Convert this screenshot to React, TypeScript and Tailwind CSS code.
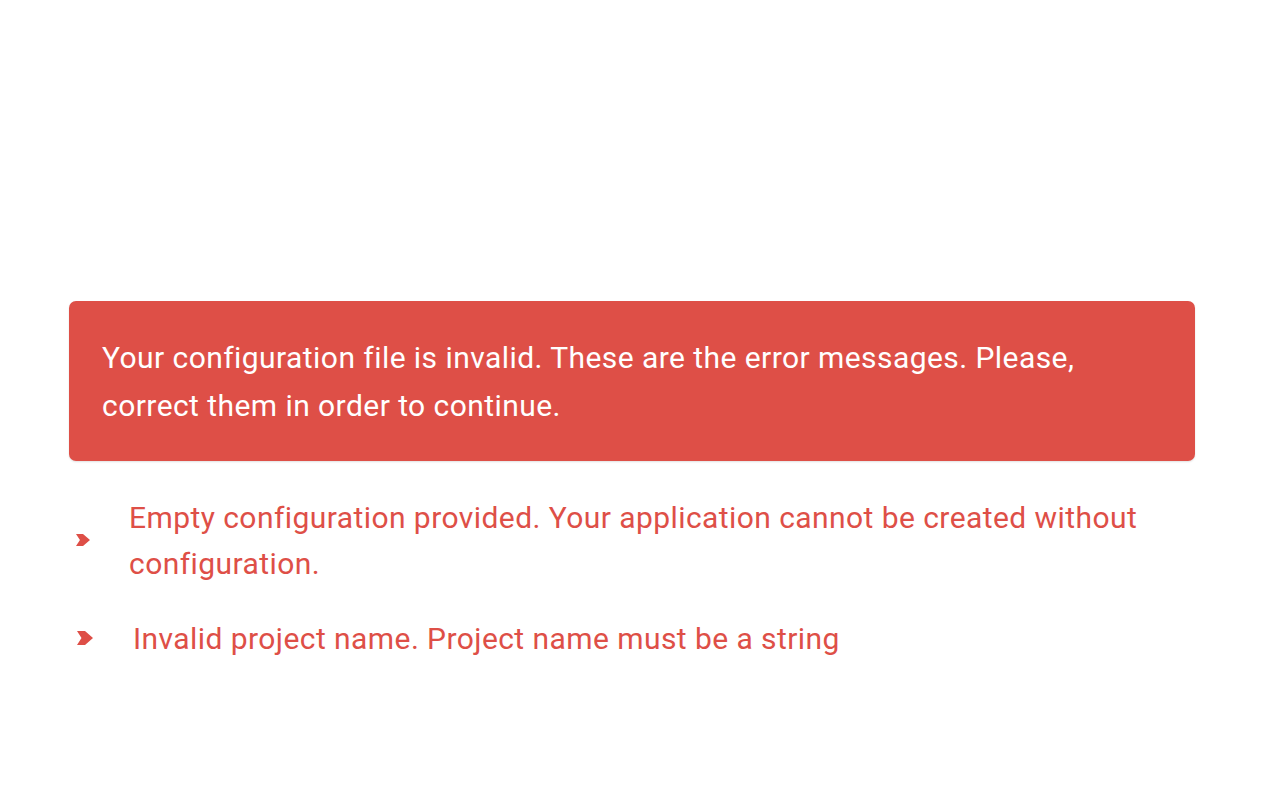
import React from "react";

function Chevron({ className }: { className?: string }) {
  return (
    <svg viewBox="0 0 16 14" className={className} fill="#de4f47" preserveAspectRatio="none">
      <polygon points="0,0 8,0 16,7 8,14 0,14 4.5,7" />
    </svg>
  );
}

export default function App() {
  const font = { fontFamily: "Roboto, 'Liberation Sans', sans-serif" };
  return (
    <div className="min-h-[792px] w-full bg-white" style={font}>
      <div className="pt-[301px] pl-[69px] w-[1195px]">
        <div className="rounded-[7px] bg-[#de4f47] px-[33px] pt-[33px] pb-[31px] text-white text-[30px] tracking-[0.44px] leading-[48px] shadow-[0_1px_2px_rgba(0,0,0,0.12)]">
          Your configuration file is invalid. These are the error messages. Please, correct them in order to continue.
        </div>
        <ul className="mt-[34px] flex flex-col gap-[29px] text-[#de4f47] text-[30px] tracking-[0.43px] leading-[46px]">
          <li className="flex items-center">
            <Chevron className="ml-[7px] w-[14px] h-[12px] shrink-0 -mt-[2px]" />
            <span className="ml-[39px] pr-[40px]">
              Empty configuration provided. Your application cannot be created without configuration.
            </span>
          </li>
          <li className="flex items-center">
            <Chevron className="ml-[8px] w-[16px] h-[14px] shrink-0 -mt-[2px]" />
            <span className="ml-[40px]">Invalid project name. Project name must be a string</span>
          </li>
        </ul>
      </div>
    </div>
  );
}
